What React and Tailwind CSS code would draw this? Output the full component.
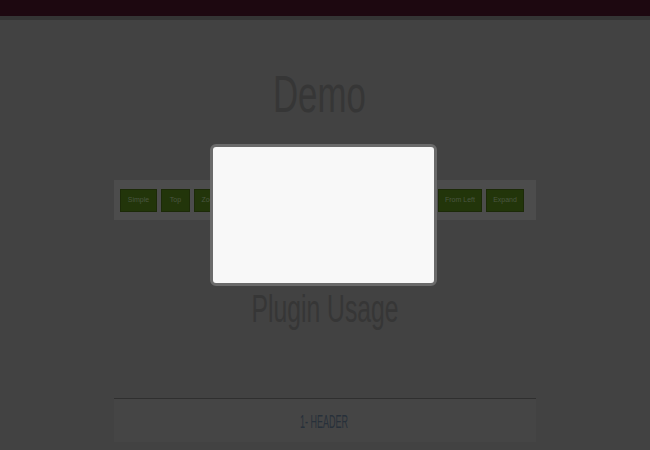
export default function App() {
  const buttons = [
    ["Simple", "w-[37px]"],
    ["Top", "w-[29px]"],
    ["Zoom", "w-[33px]"],
    ["Bottom", "w-[36px]"],
    ["Fade", "w-[30px]"],
    ["From Right", "w-[47px]"],
    ["From Top", "w-[44px]"],
    ["Rotate", "w-[30px]"],
    ["From Left", "w-[44px]"],
    ["Expand", "w-[38px]"],
  ];
  return (
    <div className="relative w-[650px] h-[450px] overflow-hidden bg-[#424242] font-['Liberation_Sans',Arial,sans-serif]">
      <div className="h-[16px] bg-[#1d0810]" />
      <div className="h-[4px] bg-[#343434]" />
      <div className="pt-[48px] pr-[12px] text-center text-[52px] leading-[52px] text-[#363636]">
        <span className="inline-block scale-x-[0.67]">Demo</span>
      </div>
      <div className="mx-auto mt-[60px] w-[422px] h-[40px] bg-[#4c4c4c] flex items-center gap-[4px] pl-[6px]">
        {buttons.map(([label, w]) => (
          <div
            key={label}
            className={`${w} h-[23px] shrink-0 bg-[#22350a] border border-[#1c2a08] flex items-center justify-center text-[7px] font-normal text-[#4a5541] whitespace-nowrap`}
          >
            {label}
          </div>
        ))}
      </div>
      <div className="mt-[70px] text-center text-[38px] leading-[38px] text-[#363636]">
        <span className="inline-block scale-x-[0.65]">Plugin Usage</span>
      </div>
      <div className="mx-auto mt-[70px] w-[422px] h-[44px] bg-[#454545] border-t border-[#2f2f2f] pt-[14px] pr-[2px] text-center text-[18px] leading-[18px] text-[#27303a]">
        <span className="inline-block scale-x-[0.5]">1- HEADER</span>
      </div>
      <div className="absolute left-[210px] top-[144px] w-[227px] h-[142px] rounded-[6px] border-[3px] border-[#6a6a6a] bg-[#f8f8f8]" />
    </div>
  );
}
